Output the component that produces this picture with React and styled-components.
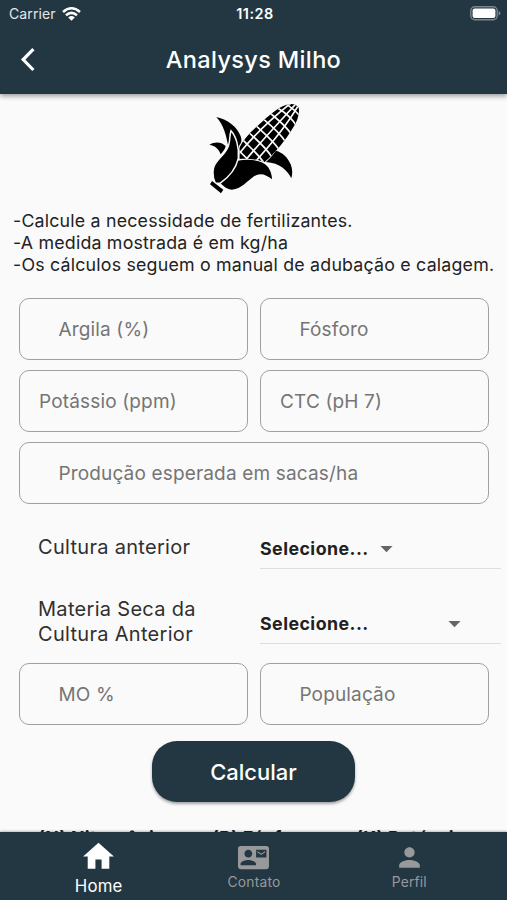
import React, { useState } from "react";
import styled, { createGlobalStyle } from "styled-components";
import {
  MdArrowDropDown,
  MdContactMail,
  MdHome,
  MdPerson,
} from "react-icons/md";

const fields = [
  { name: "argila", label: "Argila (%)", indent: 38.4 },
  { name: "fosforo", label: "Fósforo", indent: 38.4 },
  { name: "potassio", label: "Potássio (ppm)", indent: 19 },
  { name: "ctc", label: "CTC (pH 7)", indent: 19 },
  { name: "producao", label: "Produção esperada em sacas/ha", indent: 38.4, wide: true },
];

const App = () => {
  const [values, setValues] = useState({});

  // Keep every typed value under the name of its field
  const handleChange = (ev) => {
    setValues({ ...values, [ev.target.name]: ev.target.value });
  };

  const renderField = (f) => (
    <Field
      key={f.name}
      name={f.name}
      placeholder={f.label}
      value={values[f.name] || ""}
      onChange={handleChange}
      $indent={f.indent}
      $wide={f.wide}
    />
  );

  return (
    <>
      <GlobalStyle />
      <Screen>
        <Header>
          <StatusBar>
            <Carrier>
              Carrier
              <WifiIcon />
            </Carrier>
            <Clock>11:28</Clock>
            <BatteryIcon />
          </StatusBar>
          <TitleBar>
            <BackBtn aria-label="Voltar">
              <svg width="16" height="26" viewBox="0 0 16 26">
                <path d="M13.4 2.2L3.2 12.6L13.4 23" fill="none" stroke="#fff" strokeWidth="3.2" />
              </svg>
            </BackBtn>
            <Title>Analysys Milho</Title>
          </TitleBar>
        </Header>

        <Content>
          <CornWrapper>
            <CornIcon />
          </CornWrapper>
          <Intro>
            <p>-Calcule a necessidade de fertilizantes.</p>
            <p>-A medida mostrada é em kg/ha</p>
            <p>-Os cálculos seguem o manual de adubação e calagem.</p>
          </Intro>

          <Fields>{fields.map(renderField)}</Fields>

          <SelectRow $height={65}>
            <Label $bottom={10}>Cultura anterior</Label>
            <Select $gap={3} $bottom={0}>
              <span>Selecione...</span>
              <MdArrowDropDown size={29} />
            </Select>
          </SelectRow>
          <SelectRow $height={77}>
            <Label $bottom={0}>
              Materia Seca da
              <br />
              Cultura Anterior
            </Label>
            <Select $gap={71} $bottom={2}>
              <span>Selecione...</span>
              <MdArrowDropDown size={29} />
            </Select>
          </SelectRow>

          <Fields $last>
            {renderField({ name: "mo", label: "MO %", indent: 38.4 })}
            {renderField({ name: "populacao", label: "População", indent: 38.4 })}
          </Fields>

          <CalcBtn>Calcular</CalcBtn>

          <Results>
            <span>(N) Nitrogênio</span>
            <span>(P) Fósforo</span>
            <span>(K) Potássio</span>
          </Results>
        </Content>

        <Nav>
          <NavItem $active>
            <MdHome size={37} />
            <span>Home</span>
          </NavItem>
          <NavItem>
            <MdContactMail size={31} />
            <span>Contato</span>
          </NavItem>
          <NavItem>
            <MdPerson size={31} />
            <span>Perfil</span>
          </NavItem>
        </Nav>
      </Screen>
    </>
  );
};

const WifiIcon = () => (
  <svg width="19" height="14" viewBox="0 0 19 14" fill="none" stroke="#fff" strokeWidth="2.5">
    <path d="M1 5Q9.5 -2.4 18 5" />
    <path d="M4 8.3Q9.5 3.4 15 8.3" />
    <path d="M6.2 10.4Q9.5 7.6 12.8 10.4L9.5 13.8Z" fill="#fff" stroke="none" />
  </svg>
);

const BatteryIcon = () => (
  <svg width="31" height="15" viewBox="0 0 31 15">
    <rect x="0.8" y="0.8" width="26.4" height="13" rx="4" fill="none" stroke="#7b868c" strokeWidth="1.4" />
    <rect x="2.6" y="2.6" width="22.8" height="9.4" rx="2" fill="#fff" />
    <path d="M28.6 5Q30.4 5.6 30.4 7.3T28.6 9.6Z" fill="#7b868c" />
  </svg>
);

const CornIcon = () => (
  <svg width="110" height="105" viewBox="0 0 330 315">
    <defs>
      <clipPath id="cob">
        <path d="M118 158C130 134 150 112 178 88C206 62 232 38 260 29C276 24 290 28 296 38C300 56 292 78 278 100C258 134 228 172 193 202C174 192 142 190 118 192Z" />
      </clipPath>
    </defs>
    <g clipPath="url(#cob)">
      <rect x="100" y="10" width="210" height="200" />
      <g fill="none" stroke="#fafafa" strokeWidth="5">
        <path d="M114 180C158 124 220 66 278 20" />
        <path d="M138 194C180 142 236 84 290 24" />
        <path d="M164 202C208 154 260 92 296 30" />
        <path d="M114 164L146 196" />
        <path d="M130 136C150 158 172 174 192 204" />
        <path d="M148 114C172 136 196 156 214 184" />
        <path d="M170 94C194 116 218 136 236 162" />
        <path d="M192 74C216 94 240 114 256 140" />
        <path d="M212 56C234 74 258 92 274 118" />
        <path d="M234 40C254 52 276 70 290 94" />
        <path d="M256 26C272 36 288 48 302 66" />
      </g>
    </g>
    <path d="M198 201C210 190 220 178 228 167C248 172 264 188 272 208C278 224 278 238 274 250C262 226 240 204 198 201Z" />
    <path d="M49 66C84 74 112 96 122 124C126 136 125 142 118 151L112 170L84 150C78 120 72 92 49 66Z" />
    <path d="M28 150C44 140 62 140 77 153C76 162 70 168 62 178C56 162 46 152 28 150Z" />
    <path d="M112 197C154 190 188 196 204 216C212 228 216 240 216 253C198 238 180 232 162 244C142 258 124 282 96 284C82 284 70 274 58 262Z" />
    <path
      d="M93 107C108 124 118 156 115 190C108 220 90 244 60 265L46 264C36 244 36 218 49 202C62 184 80 172 86 150C91 134 88 122 93 107Z"
      stroke="#fafafa"
      strokeWidth="4.5"
    />
    <path d="M36 258L70 284L63 295L30 268Z" />
  </svg>
);

const GlobalStyle = createGlobalStyle`
  * {
    box-sizing: border-box;
  }

  body {
    margin: 0;
    background-color: #fafafa;
    font-family: Inter, "Open Sans", sans-serif;
  }

  p {
    margin: 0;
  }

  button {
    border: none;
    padding: 0;
    cursor: pointer;
    font-family: inherit;
  }
`;

const Screen = styled.div`
  display: flex;
  flex-direction: column;
  width: 507px;
  height: 900px;
  overflow: hidden;
`;

const Header = styled.header`
  flex: none;
  height: 94px;
  z-index: 1;
  color: #fff;
  background-color: #233742;
  box-shadow: 0 2px 5px rgba(0, 0, 0, 0.4);
`;

const StatusBar = styled.div`
  display: grid;
  grid-template-columns: 1fr auto 1fr;
  align-items: center;
  height: 27px;
  padding: 0 6px 0 9px;

  & > svg {
    justify-self: end;
  }
`;

const Carrier = styled.div`
  display: flex;
  align-items: center;
  gap: 6px;
  font-size: 14px;
  letter-spacing: 0.1px;
  color: #e3e7e9;
`;

const Clock = styled.div`
  font-size: 14.4px;
  font-weight: 600;
  letter-spacing: 0.5px;
`;

const TitleBar = styled.div`
  display: grid;
  grid-template-columns: 60px 1fr 60px;
  align-items: center;
  height: 65px;
`;

const BackBtn = styled.button`
  display: flex;
  padding-left: 20px;
  background: none;
`;

const Title = styled.h1`
  margin: 0;
  text-align: center;
  font-size: 23.5px;
  font-weight: 500;
  letter-spacing: 0.35px;
`;

const Content = styled.main`
  display: flex;
  flex-direction: column;
  flex: 1;
  min-height: 0;
  overflow: hidden;
`;

const CornWrapper = styled.div`
  display: flex;
  flex: none;
  height: 116px;
  padding: 1px 0 0 200px;
`;

const Intro = styled.div`
  flex: none;
  height: 88px;
  padding-left: 13px;
  font-size: 17.8px;
  line-height: 22px;
  letter-spacing: 0.2px;
  white-space: nowrap;
  color: #222;
`;

const Fields = styled.div`
  display: grid;
  flex: none;
  grid-template-columns: 1fr 1fr;
  gap: 10px 12px;
  padding: ${(props) => (props.$last ? "17px 18px 0 19px" : "0 18px 0 19px")};
`;

const Field = styled.input`
  grid-column: ${(props) => (props.$wide ? "1 / -1" : "auto")};
  width: 100%;
  min-width: 0;
  height: 62px;
  padding: 0 10px 0 ${(props) => props.$indent}px;
  border: 1px solid #a0a0a0;
  border-radius: 10px;
  outline: none;
  background: transparent;
  font-family: inherit;
  font-size: 19px;
  letter-spacing: 0.16px;
  color: #222;

  &::placeholder {
    color: #757575;
    opacity: 1;
  }
`;

const SelectRow = styled.div`
  display: grid;
  flex: none;
  grid-template-columns: 222px 241px;
  align-items: end;
  height: ${(props) => props.$height}px;
  padding-left: 38px;
`;

const Label = styled.div`
  padding-bottom: ${(props) => props.$bottom}px;
  font-size: 20px;
  line-height: 24.5px;
  letter-spacing: 0.3px;
  color: #303030;
`;

const Select = styled.div`
  display: flex;
  align-items: center;
  gap: ${(props) => props.$gap}px;
  height: 40px;
  margin-bottom: ${(props) => props.$bottom}px;
  border-bottom: 1px solid #dedede;
  font-size: 17.8px;
  font-weight: 700;
  letter-spacing: 0.45px;
  color: #212121;

  svg {
    color: #666;
  }
`;

const CalcBtn = styled.button`
  flex: none;
  align-self: center;
  width: 203px;
  height: 61px;
  margin-top: 16px;
  border-radius: 25px;
  background-color: #233742;
  box-shadow: 0 2px 3px rgba(0, 0, 0, 0.35);
  font-size: 22px;
  font-weight: 500;
  color: #fff;
`;

const Results = styled.div`
  display: grid;
  flex: none;
  grid-template-columns: 174px 144px auto;
  padding: 25px 0 0 38px;
  font-size: 17.8px;
  font-weight: 700;
  line-height: 22px;
  letter-spacing: 0.3px;
  white-space: nowrap;
  color: #212121;
`;

const Nav = styled.nav`
  display: flex;
  flex: none;
  height: 68px;
  padding: 0 20px 0 21px;
  background-color: #233742;
  box-shadow: 0 -1px 2px rgba(0, 0, 0, 0.25);
`;

const NavItem = styled.div`
  display: flex;
  flex: 1;
  flex-direction: column;
  align-items: center;
  justify-content: flex-end;
  gap: ${(props) => (props.$active ? "1px" : "0")};
  padding-bottom: ${(props) => (props.$active ? "4px" : "8px")};
  font-size: ${(props) => (props.$active ? "16.8px" : "13.8px")};
  line-height: ${(props) => (props.$active ? "20px" : "19px")};
  letter-spacing: 0.2px;
  color: ${(props) => (props.$active ? "#fff" : "#98999b")};
`;

export default App;
